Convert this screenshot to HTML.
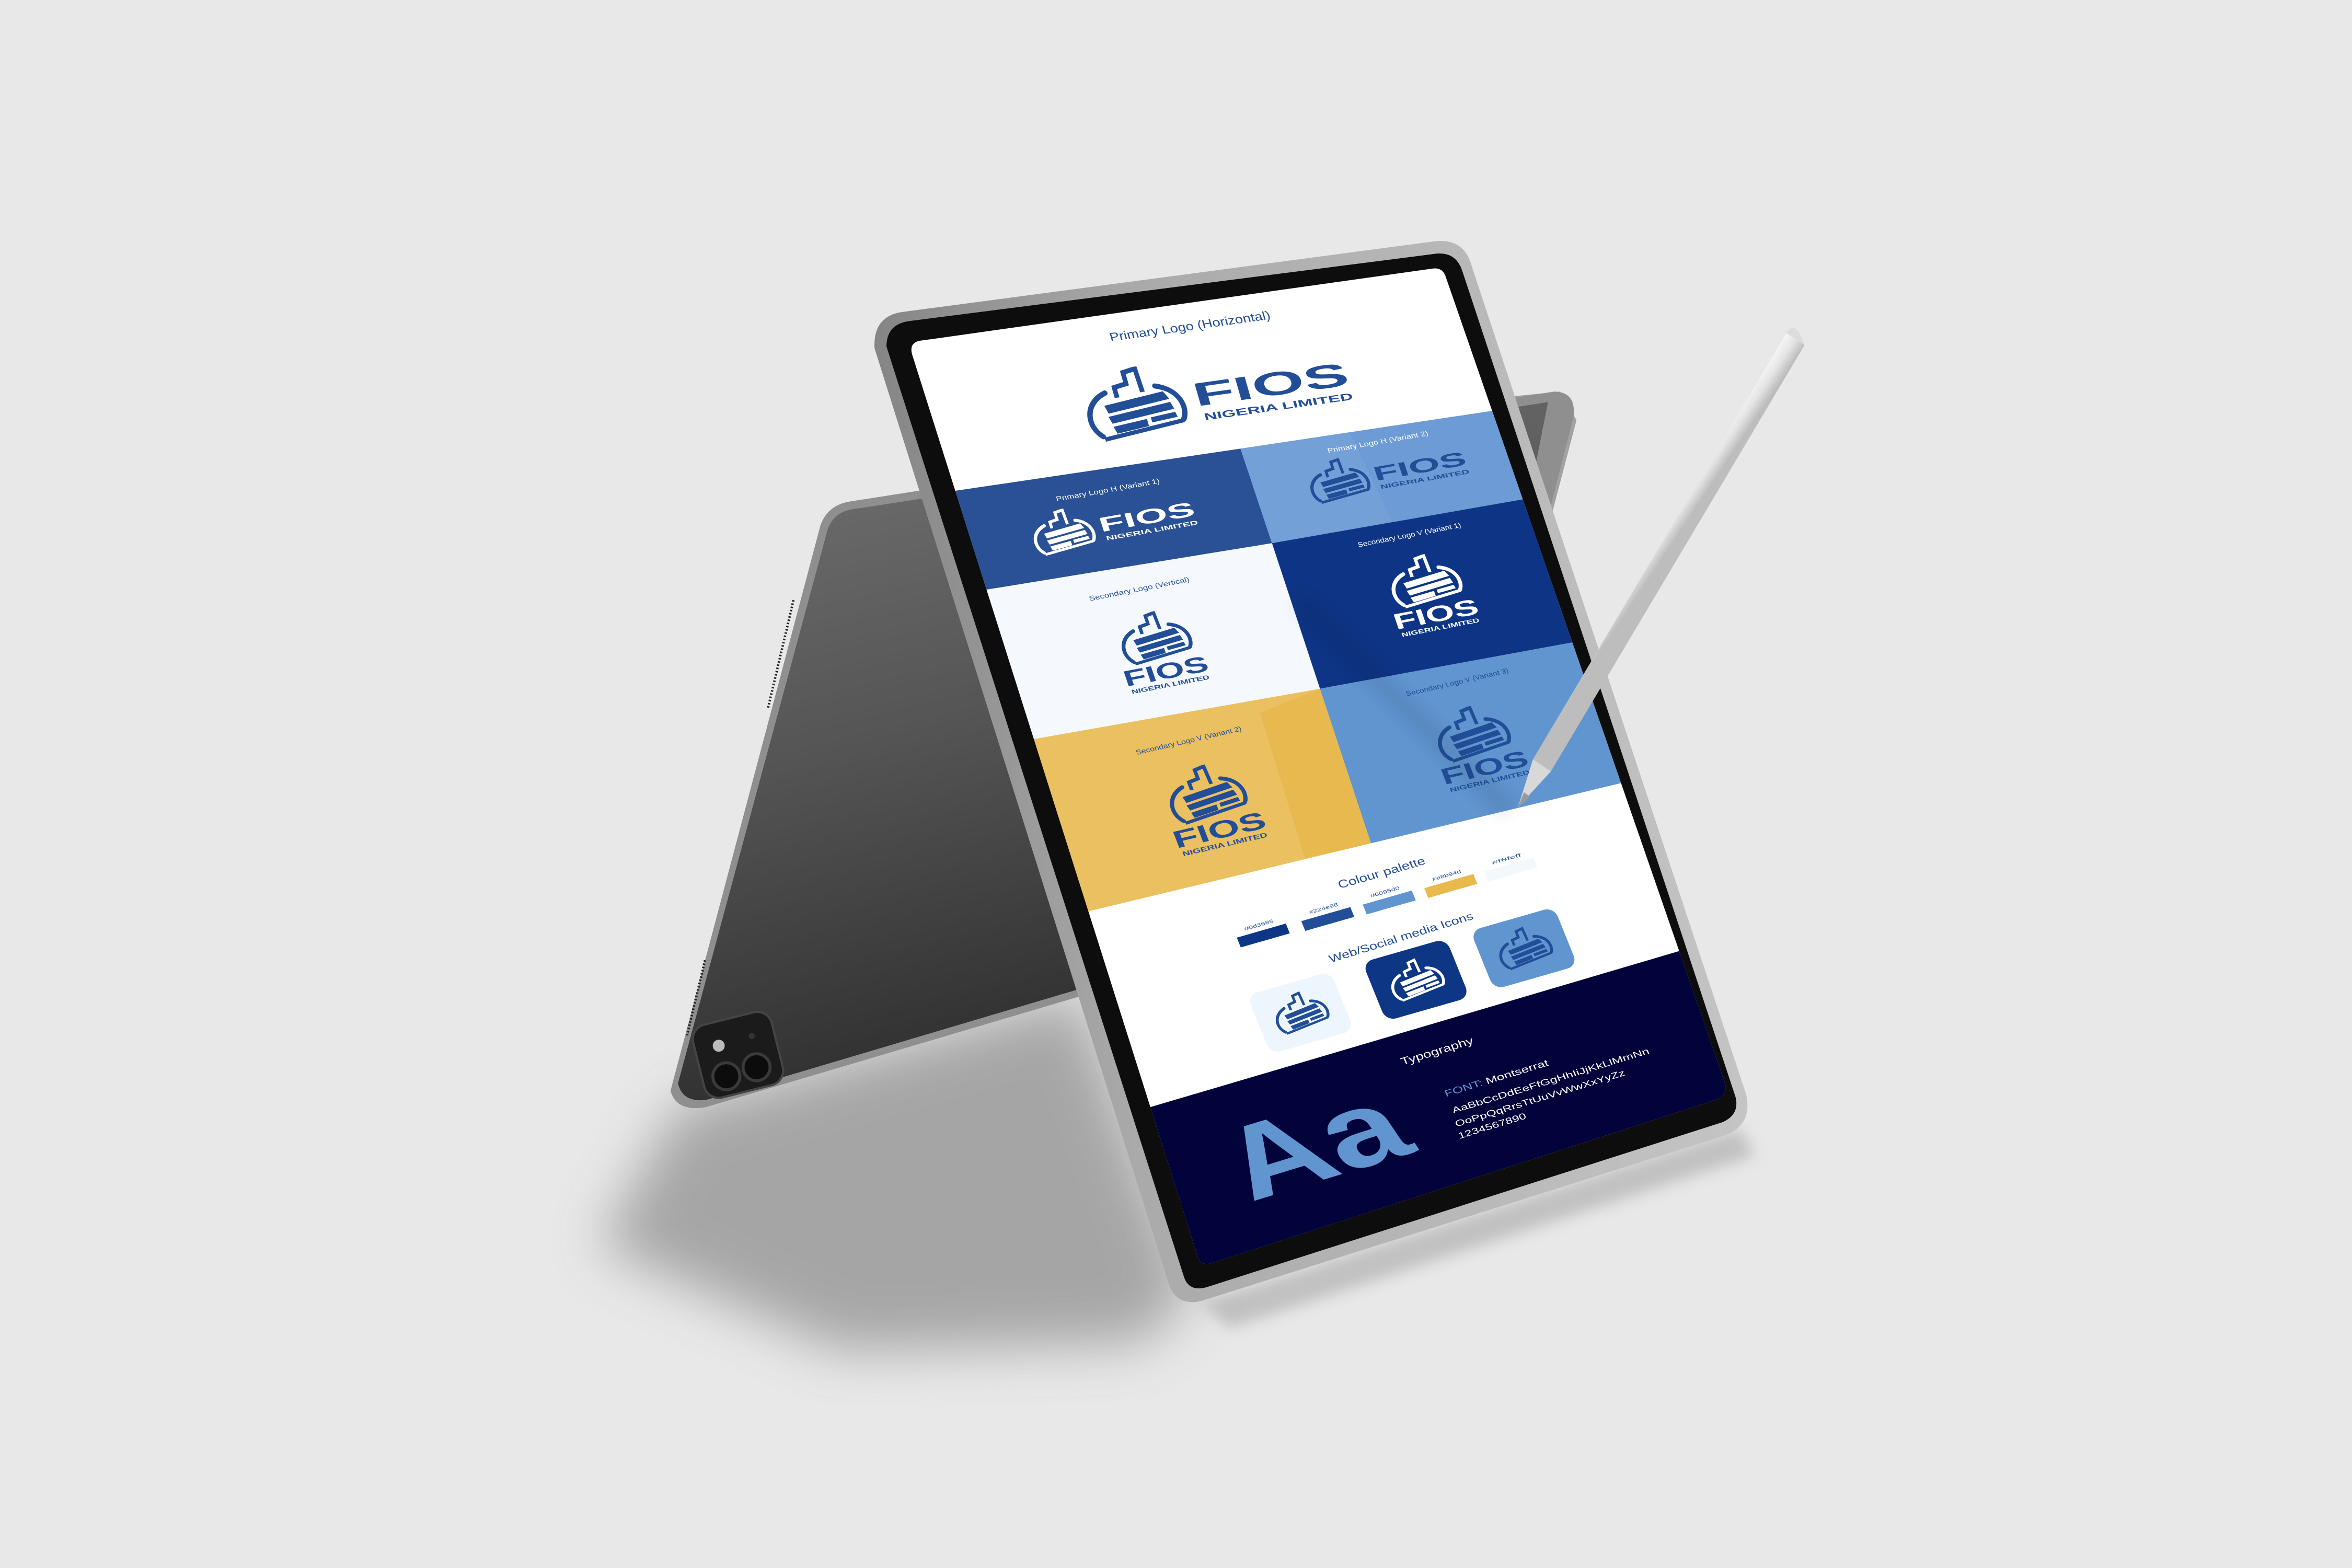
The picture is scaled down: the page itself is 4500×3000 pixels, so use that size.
<!DOCTYPE html>
<html><head><meta charset="utf-8">
<style>
html,body{margin:0;padding:0;background:#e8e8e8;}
svg{display:block;}
text{font-family:"Liberation Sans",sans-serif;}
</style></head>
<body>
<svg width="4500" height="3000" viewBox="0 0 1568 1045" preserveAspectRatio="none" xmlns="http://www.w3.org/2000/svg">
<defs>
  <symbol id="lg" viewBox="0 0 100 70">
    <path d="M13,62 C0,50 4,28 26,21 M74,21 C96,27 99,46 92,56" fill="none" stroke="currentColor" stroke-width="5" stroke-linecap="round"/>
    <path d="M14,65 L92,57" stroke="currentColor" stroke-width="4" fill="none"/>
    <polygon points="22,33 80,27 84,35 24,41" fill="currentColor"/>
    <polygon points="23,44 84,38 86,45 25,51" fill="currentColor"/>
    <polygon points="25,54 58,51 58,58 27,61" fill="currentColor"/>
    <polygon points="62,50 86,48 87,53 62,55" fill="currentColor"/>
    <path d="M36,27 L36,17 L48,15 L48,4 L60,2 L61,25" fill="none" stroke="currentColor" stroke-width="4.5" stroke-linejoin="miter"/>
  </symbol>
  <linearGradient id="backg" x1="0" y1="0" x2="0.3" y2="1">
    <stop offset="0" stop-color="#747474"/>
    <stop offset="0.5" stop-color="#555"/>
    <stop offset="1" stop-color="#2c2c2c"/>
  </linearGradient>
  <linearGradient id="frameg" x1="0" y1="0" x2="1" y2="0">
    <stop offset="0" stop-color="#858585"/>
    <stop offset="0.3" stop-color="#aaaaaa"/>
    <stop offset="1" stop-color="#c4c4c4"/>
  </linearGradient>
  <linearGradient id="peng" gradientUnits="userSpaceOnUse" x1="1191" y1="222" x2="1203" y2="230">
    <stop offset="0" stop-color="#f6f6f6"/>
    <stop offset="0.5" stop-color="#e4e4e4"/>
    <stop offset="1" stop-color="#bdbdbd"/>
  </linearGradient>
  <filter id="blur15" x="-50%" y="-50%" width="200%" height="200%"><feGaussianBlur stdDeviation="18"/></filter>
  <filter id="blur5" x="-50%" y="-50%" width="200%" height="200%"><feGaussianBlur stdDeviation="5"/></filter>
  <clipPath id="scr">
    <path d="M614,227 L955,179 Q962,178 964,185 L1150,722 Q1152,730 1144,733 L807,842 Q800,844 798,836 L608,236 Q606,228 614,227 Z"/>
  </clipPath>
</defs>

<rect width="1568" height="1045" fill="#e8e8e8"/>

<!-- floor shadows -->
<polygon points="452,738 720,662 795,862 760,895 560,900 400,830" fill="#959595" filter="url(#blur15)" opacity="0.8"/>
<polygon points="800,868 1160,752 1170,770 820,885" fill="#9a9a9a" filter="url(#blur5)" opacity="0.5"/>

<!-- back tablet -->
<polygon points="990,266 1040,261 1051,280 1030,360 1005,430 975,430" fill="#a2a2a2"/>
<path d="M547,350 Q552,336 568,334 L1036,261 Q1051,261 1049,278 L1000,470 L720,664 L470,738 Q451,741 447,727 Z" fill="#8f8f8f"/>
<path d="M552,352 Q557,340 571,339 L1032,268 L992,470 L720,659 L471,733 Q455,735 452,722 Z" fill="url(#backg)"/>
<line x1="529" y1="400" x2="512" y2="472" stroke="#222" stroke-width="1.6" stroke-dasharray="1 1.2"/>
<line x1="470" y1="640" x2="458" y2="690" stroke="#222" stroke-width="1.6" stroke-dasharray="1 1.2"/>
<!-- camera -->
<g transform="translate(492,703) rotate(-14)">
  <rect x="-27" y="-25" width="54" height="50" rx="10" fill="#1b1b1b" stroke="#444" stroke-width="1.5"/>
  <circle cx="-11" cy="12" r="9" fill="#0c0c0c" stroke="#3a3a3a" stroke-width="2"/>
  <circle cx="10" cy="11" r="9" fill="#0c0c0c" stroke="#3a3a3a" stroke-width="2"/>
  <circle cx="-11" cy="-9" r="4" fill="#bbb"/>
  <circle cx="12" cy="-10" r="2" fill="#333"/>
</g>

<!-- front tablet -->
<path d="M583,232 Q582,211 601,208 L955,161 Q976,158 981,177 L1164,729 Q1169,750 1149,757 L801,867 Q784,871 779,855 Z" fill="url(#frameg)"/>
<path d="M591,231 Q591,216 606,214 L958,169 Q971,168 975,181 L1157,731 Q1160,743 1148,748 L804,858 Q792,861 789,850 Z" fill="#0d0d0d"/>

<g clip-path="url(#scr)">
  <rect x="590" y="160" width="580" height="700" fill="#ffffff"/>
  <polygon points="590,334 827,299 848,362 590,404" fill="#2a5195"/>
  <polygon points="827,299 1180,246 1180,304 848,362" fill="#6c9bd5"/>
  <polygon points="827,299 900,288 930,352 848,362" fill="#78a6da" opacity="0.5"/>
  <polygon points="590,404 848,362 880,459 590,510" fill="#f5f9fd"/>
  <polygon points="848,362 1180,304 1180,404 880,459" fill="#0e3585"/>
  <polygon points="590,510 880,459 914,562 590,640" fill="#eac060"/>
  <polygon points="840,475 880,459 914,562 870,572" fill="#e6b74a" opacity="0.8"/>
  <polygon points="880,459 1180,404 1180,498 914,562" fill="#6095d0"/>
  <polygon points="590,790 1180,616 1180,900 590,900" fill="#02033a"/>
  <polygon points="590,790 768,742 800,860 590,900" fill="#0c0d40"/>

  <text transform="translate(794,220) rotate(-8) skewX(8)" text-anchor="middle" font-size="8" fill="#224e98" textLength="108" lengthAdjust="spacingAndGlyphs">Primary Logo (Horizontal)</text>
  <g transform="translate(796,265) rotate(-8) skewX(8)" style="color:#224e98" fill="#224e98">
    <use href="#lg" x="-75" y="-26" width="70" height="49"/>
    <text x="0" y="6" font-size="22" font-weight="bold" textLength="104" lengthAdjust="spacingAndGlyphs">FIOS</text>
    <text x="3" y="16" font-size="6.5" font-weight="bold" textLength="100" lengthAdjust="spacingAndGlyphs">NIGERIA LIMITED</text>
  </g>

  <text transform="translate(739,328) rotate(-10) skewX(8)" text-anchor="middle" font-size="4.6" fill="#ffffff" textLength="70" lengthAdjust="spacingAndGlyphs">Primary Logo H (Variant 1)</text>
  <g transform="translate(733,351) rotate(-10) skewX(8) scale(0.62)" style="color:#ffffff" fill="#ffffff">
    <use href="#lg" x="-75" y="-26" width="70" height="49"/>
    <text x="0" y="6" font-size="22" font-weight="bold" textLength="104" lengthAdjust="spacingAndGlyphs">FIOS</text>
    <text x="3" y="16" font-size="6.5" font-weight="bold" textLength="100" lengthAdjust="spacingAndGlyphs">NIGERIA LIMITED</text>
  </g>
  <text transform="translate(919,296) rotate(-10) skewX(8)" text-anchor="middle" font-size="4.6" fill="#ffffff" textLength="68" lengthAdjust="spacingAndGlyphs">Primary Logo H (Variant 2)</text>
  <g transform="translate(916,317) rotate(-10) skewX(8) scale(0.6)" style="color:#224e98" fill="#224e98">
    <use href="#lg" x="-75" y="-26" width="70" height="49"/>
    <text x="0" y="6" font-size="22" font-weight="bold" textLength="104" lengthAdjust="spacingAndGlyphs">FIOS</text>
    <text x="3" y="16" font-size="6.5" font-weight="bold" textLength="100" lengthAdjust="spacingAndGlyphs">NIGERIA LIMITED</text>
  </g>

  <text transform="translate(760,394) rotate(-11) skewX(8)" text-anchor="middle" font-size="4.6" fill="#224e98" textLength="68" lengthAdjust="spacingAndGlyphs">Secondary Logo (Vertical)</text>
  <g transform="translate(774,438) rotate(-11) skewX(8) scale(0.62)" style="color:#224e98" fill="#224e98">
    <use href="#lg" x="-40" y="-50" width="80" height="56"/>
    <text x="0" y="24" text-anchor="middle" font-size="24" font-weight="bold" textLength="92" lengthAdjust="spacingAndGlyphs">FIOS</text>
    <text x="0" y="33" text-anchor="middle" font-size="6.5" font-weight="bold" textLength="85" lengthAdjust="spacingAndGlyphs">NIGERIA LIMITED</text>
  </g>
  <text transform="translate(940,358) rotate(-11) skewX(8)" text-anchor="middle" font-size="4.6" fill="#ffffff" textLength="70" lengthAdjust="spacingAndGlyphs">Secondary Logo V (Variant 1)</text>
  <g transform="translate(954,400) rotate(-11) skewX(8) scale(0.62)" style="color:#ffffff" fill="#ffffff">
    <use href="#lg" x="-40" y="-50" width="80" height="56"/>
    <text x="0" y="24" text-anchor="middle" font-size="24" font-weight="bold" textLength="92" lengthAdjust="spacingAndGlyphs">FIOS</text>
    <text x="0" y="33" text-anchor="middle" font-size="6.5" font-weight="bold" textLength="85" lengthAdjust="spacingAndGlyphs">NIGERIA LIMITED</text>
  </g>

  <text transform="translate(793,495) rotate(-13) skewX(8)" text-anchor="middle" font-size="4.6" fill="#224e98" textLength="72" lengthAdjust="spacingAndGlyphs">Secondary Logo V (Variant 2)</text>
  <g transform="translate(809,543) rotate(-13) skewX(8) scale(0.68)" style="color:#224e98" fill="#224e98">
    <use href="#lg" x="-40" y="-50" width="80" height="56"/>
    <text x="0" y="24" text-anchor="middle" font-size="24" font-weight="bold" textLength="92" lengthAdjust="spacingAndGlyphs">FIOS</text>
    <text x="0" y="33" text-anchor="middle" font-size="6.5" font-weight="bold" textLength="85" lengthAdjust="spacingAndGlyphs">NIGERIA LIMITED</text>
  </g>
  <text transform="translate(972,456) rotate(-13) skewX(8)" text-anchor="middle" font-size="4.6" fill="#224e98" textLength="70" lengthAdjust="spacingAndGlyphs">Secondary Logo V (Variant 3)</text>
  <g transform="translate(986,502) rotate(-13) skewX(8) scale(0.64)" style="color:#224e98" fill="#224e98">
    <use href="#lg" x="-40" y="-50" width="80" height="56"/>
    <text x="0" y="24" text-anchor="middle" font-size="24" font-weight="bold" textLength="92" lengthAdjust="spacingAndGlyphs">FIOS</text>
    <text x="0" y="33" text-anchor="middle" font-size="6.5" font-weight="bold" textLength="85" lengthAdjust="spacingAndGlyphs">NIGERIA LIMITED</text>
  </g>

  <text transform="translate(922,584) rotate(-16) skewX(6)" text-anchor="middle" font-size="7.5" fill="#224e98" textLength="60" lengthAdjust="spacingAndGlyphs">Colour palette</text>
  <g transform="translate(842,623) rotate(-16) skewX(6)"><rect x="-17" y="-3" width="34" height="7" fill="#0d3685"/><text x="0" y="-6" text-anchor="middle" font-size="3.2" fill="#224e98" textLength="20" lengthAdjust="spacingAndGlyphs">#0d3685</text></g>
  <g transform="translate(885,612) rotate(-16) skewX(6)"><rect x="-17" y="-3" width="34" height="7" fill="#224e98"/><text x="0" y="-6" text-anchor="middle" font-size="3.2" fill="#224e98" textLength="20" lengthAdjust="spacingAndGlyphs">#224e98</text></g>
  <g transform="translate(926,601) rotate(-16) skewX(6)"><rect x="-17" y="-3" width="34" height="7" fill="#6095d0"/><text x="0" y="-6" text-anchor="middle" font-size="3.2" fill="#224e98" textLength="20" lengthAdjust="spacingAndGlyphs">#6095d0</text></g>
  <g transform="translate(967,590) rotate(-16) skewX(6)"><rect x="-17" y="-3" width="34" height="7" fill="#e8b94d"/><text x="0" y="-6" text-anchor="middle" font-size="3.2" fill="#224e98" textLength="20" lengthAdjust="spacingAndGlyphs">#e8b94d</text></g>
  <g transform="translate(1007,579) rotate(-16) skewX(6)"><rect x="-17" y="-3" width="34" height="7" fill="#f3f8fd"/><text x="0" y="-6" text-anchor="middle" font-size="3.2" fill="#224e98" textLength="20" lengthAdjust="spacingAndGlyphs">#f8fcff</text></g>

  <text transform="translate(935,627) rotate(-17) skewX(6)" text-anchor="middle" font-size="7.2" fill="#224e98" textLength="100" lengthAdjust="spacingAndGlyphs">Web/Social media Icons</text>
  <g transform="translate(867,675) rotate(-16) skewX(6)" style="color:#224e98">
    <rect x="-29" y="-21" width="58" height="42" rx="7" fill="#eef6fd"/>
    <use href="#lg" x="-19" y="-14" width="38" height="27"/>
  </g>
  <g transform="translate(944,653) rotate(-16) skewX(6)" style="color:#ffffff">
    <rect x="-29" y="-21" width="58" height="42" rx="7" fill="#0d3685"/>
    <use href="#lg" x="-19" y="-14" width="38" height="27"/>
  </g>
  <g transform="translate(1016,632) rotate(-16) skewX(6)" style="color:#224e98">
    <rect x="-29" y="-21" width="58" height="42" rx="7" fill="#6095d0"/>
    <use href="#lg" x="-19" y="-14" width="38" height="27"/>
  </g>

  <text transform="translate(935,710) rotate(-17) skewX(6)" font-size="7" fill="#ffffff" textLength="50" lengthAdjust="spacingAndGlyphs">Typography</text>
  <text transform="translate(964,731) rotate(-17) skewX(6)" font-size="6.2" fill="#ffffff" textLength="72" lengthAdjust="spacingAndGlyphs"><tspan fill="#6095d0">FONT:</tspan> Montserrat</text>
  <text transform="translate(969,742) rotate(-17) skewX(6)" font-size="5.8" fill="#ffffff" textLength="137" lengthAdjust="spacingAndGlyphs">AaBbCcDdEeFfGgHhIiJjKkLlMmNn</text>
  <text transform="translate(971,751) rotate(-17) skewX(6)" font-size="5.8" fill="#ffffff" textLength="118" lengthAdjust="spacingAndGlyphs">OoPpQqRrsTtUuVvWwXxYyZz</text>
  <text transform="translate(973,759) rotate(-17) skewX(6)" font-size="5.8" fill="#ffffff" textLength="47" lengthAdjust="spacingAndGlyphs">1234567890</text>
  <text transform="translate(834,801) rotate(-17) skewX(17)" font-size="72" font-weight="bold" fill="#6095d0" textLength="117" lengthAdjust="spacingAndGlyphs">Aa</text>

  <polygon points="870,395 1012,537 1000,545 860,405" fill="#000" opacity="0.08" filter="url(#blur5)"/>
</g>

<polygon points="1203,230 1191,222 1022,506 1034,514" fill="url(#peng)"/>
<path d="M1191,222 Q1197,212 1203,230 Z" fill="#dcdcdc"/>
<polygon points="1022,506 1034,514 1012,538" fill="#d8d8d8"/>
<polygon points="1016,528 1020,531 1012,538" fill="#9a9a9a"/>
</svg>
</body></html>
